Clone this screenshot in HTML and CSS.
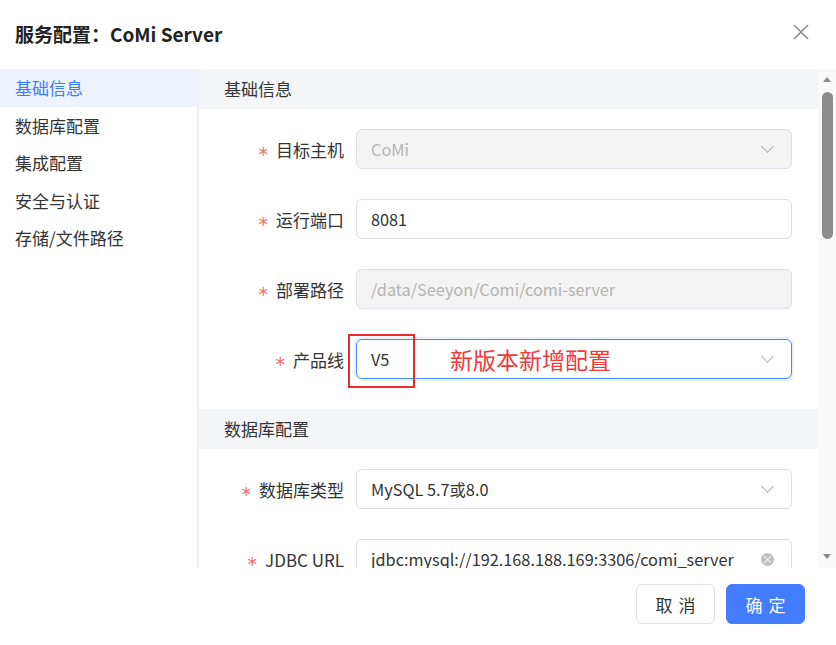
FILE: index.html
```html
<!DOCTYPE html>
<html lang="zh-CN">
<head>
  <meta charset="UTF-8">
  <meta name="viewport" content="width=device-width, initial-scale=1.0">
  <title>服务配置：CoMi Server</title>
  <link rel="stylesheet" href="styles.css">
</head>
<body>

  <div class="dialog">
    <div class="dialog-header">
      <span class="dialog-title">服务配置：CoMi Server</span>
      <button class="btn-close" aria-label="关闭">
        <svg width="16" height="16" viewBox="0 0 16 16"><path d="M1 1L15 15M15 1L1 15" stroke="#8c8c8c" stroke-width="1.6" fill="none"/></svg>
      </button>
    </div>

    <div class="dialog-body">
      <ul class="nav">
        <li class="nav-item active">基础信息</li>
        <li class="nav-item">数据库配置</li>
        <li class="nav-item">集成配置</li>
        <li class="nav-item">安全与认证</li>
        <li class="nav-item">存储/文件路径</li>
      </ul>

      <div class="content">
        <div class="section-title">基础信息</div>
        <div class="form">
          <div class="form-row">
            <label class="form-label"><i>*</i>目标主机</label>
            <div class="input disabled">CoMi<span class="arrow"></span></div>
          </div>
          <div class="form-row">
            <label class="form-label"><i>*</i>运行端口</label>
            <div class="input">8081</div>
          </div>
          <div class="form-row">
            <label class="form-label"><i>*</i>部署路径</label>
            <div class="input disabled">/data/Seeyon/Comi/comi-server</div>
          </div>
          <div class="form-row">
            <label class="form-label"><i>*</i>产品线</label>
            <div class="input focus">V5<span class="arrow"></span>
              <span class="mark-box"></span>
              <span class="mark-text">新版本新增配置</span>
            </div>
          </div>
        </div>

        <div class="section-title">数据库配置</div>
        <div class="form">
          <div class="form-row">
            <label class="form-label"><i>*</i>数据库类型</label>
            <div class="input">MySQL 5.7或8.0<span class="arrow"></span></div>
          </div>
          <div class="form-row">
            <label class="form-label"><i>*</i>JDBC URL</label>
            <div class="input">jdbc:mysql://192.168.188.169:3306/comi_server<span class="clear">×</span></div>
          </div>
          <div class="form-row">
            <label class="form-label"><i>*</i>用户名</label>
            <div class="input">root</div>
          </div>
        </div>
      </div>

      <div class="scrollbar">
        <span class="scroll-up"></span>
        <div class="scroll-thumb"></div>
        <span class="scroll-down"></span>
      </div>
    </div>

    <div class="dialog-footer">
      <button class="btn">取消</button>
      <button class="btn primary">确定</button>
    </div>
  </div>

</body>
</html>
```

FILE: styles.css
```css
* {
  box-sizing: border-box;
}
body {
  margin: 0;
  font-family: "Noto Sans CJK SC", sans-serif;
  font-size: 17px;
  color: #333;
  background: #fff;
}
.dialog {
  width: 836px;
  height: 645px;
  display: flex;
  flex-direction: column;
}
.dialog-header {
  height: 69px;
  display: flex;
  align-items: center;
  justify-content: space-between;
  padding: 0 27px 2px 15px;
}
.dialog-title {
  font-size: 19px;
  font-weight: bold;
  color: #222;
}
.btn-close {
  border: none;
  background: none;
  padding: 0;
  margin-top: 0;
  cursor: pointer;
}
.dialog-body {
  height: 499px;
  display: flex;
  overflow: hidden;
}
.nav {
  list-style: none;
  margin: 0;
  padding: 0;
  width: 199px;
  flex-shrink: 0;
  border-right: 2px solid #eef0f4;
}
.nav-item {
  height: 37.6px;
  line-height: 37px;
  padding-left: 15px;
  color: #333;
}
.nav-item.active {
  background: #edf2fc;
  color: #3a7afe;
}
.content {
  flex: 1;
  overflow: hidden;
}
.section-title {
  height: 40px;
  line-height: 40px;
  padding-left: 25px;
  background: #f4f5f7;
  color: #333;
}
.form {
  padding: 20px 26px 30px 0;
  display: flex;
  flex-direction: column;
  gap: 30px;
}
.form-row {
  display: grid;
  grid-template-columns: 145px 1fr;
  gap: 12px;
  align-items: center;
}
.form-label {
  text-align: right;
  white-space: nowrap;
  color: #333;
}
.form-label i {
  font-style: normal;
  color: #f56c6c;
  font-size: 19px;
  font-family: "DejaVu Sans", sans-serif;
  margin-right: 8px;
  position: relative;
  top: 4px;
}
.input {
  position: relative;
  height: 40px;
  line-height: 38px;
  padding-left: 14px;
  border: 1px solid #dcdfe6;
  border-radius: 6px;
  font-size: 16.3px;
  color: #333;
  white-space: nowrap;
}
.input.disabled {
  background: #f3f3f3;
  color: #b4b4b4;
}
.input.focus {
  border-color: #4a8af6;
  box-shadow: 0 0 0 2px rgba(64, 150, 255, 0.12);
}
.arrow {
  position: absolute;
  right: 19px;
  top: 12px;
  width: 9px;
  height: 9px;
  border-right: 1px solid #a8abb2;
  border-bottom: 1px solid #a8abb2;
  transform: rotate(45deg);
}
.clear {
  position: absolute;
  right: 17px;
  top: 13px;
  width: 13px;
  height: 13px;
  border-radius: 50%;
  background: #c0c0c0;
  color: #fff;
  font-size: 11px;
  line-height: 13px;
  text-align: center;
}
.mark-box {
  position: absolute;
  left: -9px;
  top: -6px;
  width: 67px;
  height: 54px;
  border: 2px solid #ec2c2c;
}
.mark-text {
  position: absolute;
  left: 93px;
  top: 0;
  font-size: 23px;
  color: #f03a3a;
  line-height: 38px;
}
.scrollbar {
  width: 18px;
  flex-shrink: 0;
  background: #f9f9f9;
  display: flex;
  flex-direction: column;
  align-items: center;
  padding-top: 8px;
}
.scroll-up,
.scroll-down {
  width: 0;
  height: 0;
  border-left: 4px solid transparent;
  border-right: 4px solid transparent;
}
.scroll-up {
  border-bottom: 5px solid #8a8a8a;
}
.scroll-down {
  border-top: 5px solid #8a8a8a;
  margin-top: auto;
  margin-bottom: 9px;
}
.scroll-thumb {
  width: 11px;
  height: 147px;
  margin-top: 10px;
  border-radius: 6px;
  background: #8c8c8c;
}
.dialog-footer {
  flex: 1;
  display: flex;
  justify-content: flex-end;
  align-items: flex-start;
  gap: 11px;
  padding: 16px 31px 0 0;
}
.btn {
  width: 79px;
  height: 40px;
  border: 1px solid #dcdfe6;
  border-radius: 6px;
  background: #fff;
  font-family: inherit;
  font-size: 17px;
  letter-spacing: 6px;
  text-indent: 6px;
  color: #333;
  cursor: pointer;
}
.btn.primary {
  background: #437cff;
  border-color: #437cff;
  color: #fff;
}
```
